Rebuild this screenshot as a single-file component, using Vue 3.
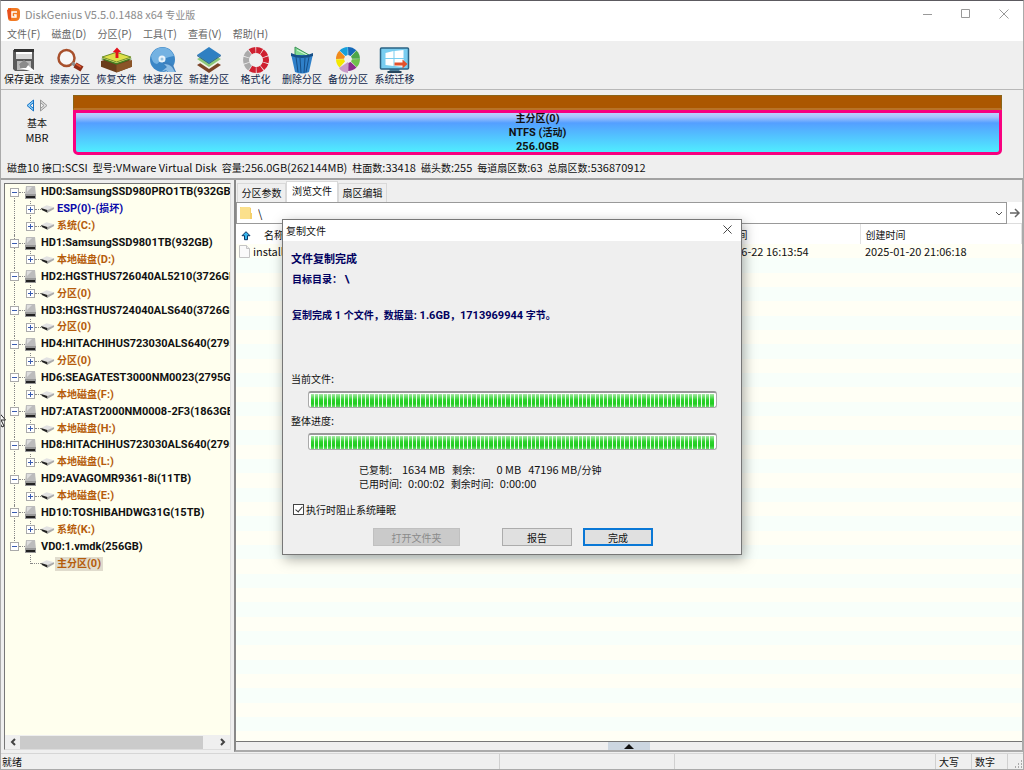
<script setup>
import { h, ref } from 'vue'

// Chinese runs are set one size smaller than the Latin text beside them.
const Mix = (props) =>
  props.t
    .split(/([\u3001-\u9fff\uff00-\uffef]+)/)
    .filter(Boolean)
    .map((s) => (/[\u3001-\u9fff\uff00-\uffef]/.test(s) ? h('span', { class: 'zh' }, s) : s))
Mix.props = ['t']

const menus = ['文件(F)', '磁盘(D)', '分区(P)', '工具(T)', '查看(V)', '帮助(H)']
const tools = [
  { id: 'save', t: '保存更改' },
  { id: 'search', t: '搜索分区' },
  { id: 'recover', t: '恢复文件' },
  { id: 'quick', t: '快速分区' },
  { id: 'layers', t: '新建分区' },
  { id: 'format', t: '格式化' },
  { id: 'trash', t: '删除分区' },
  { id: 'backup', t: '备份分区' },
  { id: 'migrate', t: '系统迁移' },
]
const info = [
  '磁盘10 接口:SCSI',
  '型号:VMware Virtual Disk',
  '容量:256.0GB(262144MB)',
  '柱面数:33418',
  '磁头数:255',
  '每道扇区数:63',
  '总扇区数:536870912',
]
const tree = [
  { t: 'HD0:SamsungSSD980PRO1TB(932GB)', k: 'disk' },
  { t: 'ESP(0)-(损坏)', k: 'part', c: 'blue', more: true },
  { t: '系统(C:)', k: 'part' },
  { t: 'HD1:SamsungSSD9801TB(932GB)', k: 'disk' },
  { t: '本地磁盘(D:)', k: 'part' },
  { t: 'HD2:HGSTHUS726040AL5210(3726GB)', k: 'disk' },
  { t: '分区(0)', k: 'part' },
  { t: 'HD3:HGSTHUS724040ALS640(3726GB)', k: 'disk' },
  { t: '分区(0)', k: 'part' },
  { t: 'HD4:HITACHIHUS723030ALS640(2795GB)', k: 'disk' },
  { t: '分区(0)', k: 'part' },
  { t: 'HD6:SEAGATEST3000NM0023(2795GB)', k: 'disk' },
  { t: '本地磁盘(F:)', k: 'part' },
  { t: 'HD7:ATAST2000NM0008-2F3(1863GB)', k: 'disk' },
  { t: '本地磁盘(H:)', k: 'part' },
  { t: 'HD8:HITACHIHUS723030ALS640(2795GB)', k: 'disk' },
  { t: '本地磁盘(L:)', k: 'part' },
  { t: 'HD9:AVAGOMR9361-8i(11TB)', k: 'disk' },
  { t: '本地磁盘(E:)', k: 'part' },
  { t: 'HD10:TOSHIBAHDWG31G(15TB)', k: 'disk' },
  { t: '系统(K:)', k: 'part' },
  { t: 'VD0:1.vmdk(256GB)', k: 'disk', last: true },
  { t: '主分区(0)', k: 'part', leaf: true, last: true, sel: true },
]
const tabs = ['分区参数', '浏览文件', '扇区编辑']
const path = ref('\\')
const noSleep = ref(true)
const seg = (a, b) => {
  const p = (r, d) => `${13 + r * Math.cos((d * Math.PI) / 180)} ${13 + r * Math.sin((d * Math.PI) / 180)}`
  return `M${p(13, a)}A13 13 0 0 1 ${p(13, b)}L${p(7, b)}A7 7 0 0 0 ${p(7, a)}Z`
}
const ring = Array.from({ length: 10 }, (_, i) => ({
  d: seg(i * 36 - 89, i * 36 - 57),
  c: i > 5 && i < 9 ? '#aaa' : '#cf2030',
}))
const wheelColors = ['#1668b8', '#4fa64a', '#6fc04c', '#8a2c8c', '#c79ac6', '#f4e800', '#f08a1c', '#16a0dc']
const wheel = wheelColors.map((c, i) => {
  const p = (r, d) => `${13 + r * Math.cos((d * Math.PI) / 180)} ${12 + r * Math.sin((d * Math.PI) / 180)}`
  const a = i * 45 - 90
  return { c, d: `M${p(4, a + 4)}L${p(12, a)}A12 12 0 0 1 ${p(12, a + 44)}L${p(4, a + 40)}Z`, low: i === 4 }
})
</script>

<template>
  <div class="window">
    <header class="title">
      <svg class="logo" viewBox="0 0 13 14"><path d="M1 1h8q4 0 4 4v4q0 5-5 5H4Q1 14 1 11Z" fill="#f27a22" /><path d="M0 3l4-2v12l-3-2Z" fill="#e8501c" /><path d="M10 5H5v5h4V8H7" fill="none" stroke="#fff" stroke-width="1.4" /></svg>
      <h1><Mix t="DiskGenius V5.5.0.1488 x64 专业版" /></h1>
      <div class="winbtns">
        <button aria-label="最小化"><svg viewBox="0 0 10 10"><path d="M0 5.5h9" /></svg></button>
        <button aria-label="最大化"><svg viewBox="0 0 10 10"><path d="M.5 .5h8v8h-8z" /></svg></button>
        <button aria-label="关闭窗口"><svg viewBox="0 0 10 10"><path d="M.5 .5l9 9m0-9l-9 9" /></svg></button>
      </div>
    </header>

    <nav class="menu">
      <button v-for="m in menus" :key="m"><Mix :t="m" /></button>
    </nav>

    <div class="toolbar">
      <button v-for="b in tools" :key="b.id">
        <svg viewBox="0 0 26 26" v-if="b.id === 'save'">
          <path d="M2 3h21v21H4L2 22Z" fill="#5b5b5b" /><path d="M3 2h20v3H3z" fill="#333" />
          <path d="M5 5h16v7H5z" fill="#d8d8d8" /><path d="M5 5h16v2H5z" fill="#fff" />
          <path d="M6 14h14v9H6z" fill="#b9b9b9" /><path d="M8 17l4-3 7 6 5 4h-5l-10-3Z" fill="#fff" /><path d="M8 17l5-4 5 4-3 4H9Z" fill="#8b8b8b" />
        </svg>
        <svg viewBox="0 0 26 26" v-else-if="b.id === 'search'">
          <circle cx="9.500" cy="11" r="8" fill="#fff" fill-opacity=".5" stroke="#a8502c" stroke-width="2.500" />
          <path d="M15 16l4 3" stroke="#8b8b8b" stroke-width="3" /><path d="M18 18l7 4" stroke="#8e2d17" stroke-width="6" /><path d="M19 17l5 3" stroke="#e05a34" stroke-width="1.500" />
        </svg>
        <svg viewBox="0 0 32 26" class="wide" v-else-if="b.id === 'recover'">
          <path d="M0 14l16-5 16 5v6l-16 6-16-6Z" fill="#6b3d1b" /><path d="M16 18l16-5v7l-16 6Z" fill="#8a5427" />
          <path d="M0 12l16-6 16 6-16 6Z" fill="#447e22" /><path d="M1 11l15-6 15 6-15 5Z" fill="#f4f08a" /><path d="M1 10l15-5 15 5-15 5Z" fill="#dfe04a" stroke="#6a8b25" />
          <path d="M15 11V5h-3l4.500-5L21 5h-3v6Z" fill="#e3141c" />
        </svg>
        <svg viewBox="0 0 26 26" v-else-if="b.id === 'quick'">
          <circle cx="12.500" cy="12.500" r="12.500" fill="#3b86c6" /><path d="M1 9a12 12 0 0 1 23 0q-10 1-17 8Q2 16 1 9Z" fill="#74b2e2" />
          <circle cx="12" cy="12" r="3.500" fill="#eaf4fb" /><circle cx="12" cy="12" r="1.500" fill="#9bc4e2" /><path d="M13 15q6 0 10 3l3 7H17Z" fill="#3d7fbd" /><path d="M11 25l6-5-3-3q5 0 8 3l3 5h-7l-2-2Z" fill="#8dbde4" />
        </svg>
        <svg viewBox="0 0 26 26" v-else-if="b.id === 'layers'">
          <path d="M1 18l12-7 12 7-12 8Z" fill="#7c4428" /><path d="M1 14l12-6 12 6-12 8Z" fill="#f0f4e9" /><path d="M1 12l12-6 12 6-12 8Z" fill="#8ec97b" /><path d="M1 8l12-8 12 8-12 8Z" fill="#2f80c2" /><path d="M1 8l12 8 12-8v1l-12 8-12-8Z" fill="#205b92" />
        </svg>
        <svg viewBox="0 0 26 26" v-else-if="b.id === 'format'"><path v-for="(s, i) in ring" :key="i" :d="s.d" :fill="s.c" /></svg>
        <svg viewBox="0 0 26 26" v-else-if="b.id === 'trash'">
          <path d="M6 9L6 0l14 8Z" fill="#80d991" stroke="#3d9458" /><path d="M8 3l10 5" stroke="#d8f9da" />
          <path d="M2 7l2 1h18l2-1-4 18q-7 3-14 0Z" fill="#2f80c9" /><path d="M2 6q11 5 22 0v3q-11 4-22 0Z" fill="#174f87" /><path d="M7 10l2 15M11 11l1 15M16 11l-1 15M20 10l-3 15" stroke="#174f87" />
        </svg>
        <svg viewBox="0 0 26 26" v-else-if="b.id === 'backup'">
          <template v-for="(s, i) in wheel" :key="i"><path v-if="!s.low" :d="s.d" :fill="s.c" /></template>
          <path d="M13 15L4 21q2 4 9 5Z" fill="#c99bc8" />
        </svg>
        <svg viewBox="0 0 30 26" class="wide" v-else>
          <path d="M10 22h10v3H10z" fill="#4d7f9b" /><path d="M8 25h14" stroke="#27465c" stroke-width="2" />
          <rect x="1" y="1" width="28" height="21" rx="1" fill="#79cdf0" stroke="#2b6384" stroke-width="1.500" />
          <path d="M6 6l8-2v7H6zm9-2l9-1v8h-9zM6 12h8v7l-8-1zm9 0h9v8l-9-1z" fill="#fff" /><path d="M15 15.500h8v-3l5 4.500-5 4.500v-3h-8Z" fill="#e4512b" />
        </svg>
        <Mix :t="b.t" />
      </button>
    </div>

    <section class="disk">
      <div class="diskline">
        <div class="disktype">
          <div class="arrows">
            <button aria-label="上一个磁盘"><svg viewBox="0 0 9 13"><path d="M7.500 1v11L1 6.500ZM7 4L4 6.500 7 9" fill="#8fd0fa" stroke="#1672c4" /></svg></button>
            <button aria-label="下一个磁盘"><svg viewBox="0 0 9 13"><path d="M1.500 1v11L8 6.500ZM2 4l3 2.500L2 9" fill="#ddd" stroke="#999" /></svg></button>
          </div>
          <Mix t="基本" />
          <span>MBR</span>
        </div>
        <div class="diskbar">
          <div class="brown"></div>
          <div class="volume">
            <span><Mix t="主分区(0)" /></span>
            <span><Mix t="NTFS (活动)" /></span>
            <span>256.0GB</span>
          </div>
        </div>
      </div>
      <p class="info"><span v-for="i in info" :key="i"><Mix :t="i" /></span></p>
    </section>

    <main class="body">
      <aside class="side">
        <ul class="tree">
          <li v-for="(n, i) in tree" :key="i" :class="[n.k, n.c, { last: n.last, leaf: n.leaf, more: n.more, first: i === 0 }]">
            <i class="trunk"></i>
            <i v-if="n.k === 'part'" class="branch"></i>
            <button v-if="!n.leaf" class="exp" :aria-label="n.k === 'disk' ? '折叠' : '展开'">
              <svg viewBox="0 0 9 9"><rect x=".5" y=".5" width="8" height="8" fill="#fff" stroke="#aaa" /><path :d="n.k === 'disk' ? 'M2 4.500h5' : 'M2 4.500h5M4.500 2v5'" stroke="#3a5cb0" /></svg>
            </button>
            <span v-else class="exp"></span>
            <i class="dash"></i>
            <svg v-if="n.k === 'disk'" class="dicon" viewBox="0 0 11 13"><path d="M1 0h9l1 9H0Z" fill="#bcbcbc" /><path d="M2 1h5L2 6Z" fill="#ddd" /><path d="M0 8h11v5H0z" fill="#999" /><path d="M1 10h9v2H1z" fill="#222" /></svg>
            <svg v-else class="picon" viewBox="0 0 15 8"><path d="M0 3l6-3 8 2-6 3Z" fill="#e2e2e2" /><path d="M0 3l7 2v3L1 5Z" fill="#222" /><path d="M7 5l7-3v2L7 8Z" fill="#aaa" /></svg>
            <span class="label" :class="{ sel: n.sel }"><Mix :t="n.t" /></span>
          </li>
        </ul>
        <div class="hscroll">
          <button aria-label="向左滚动"><svg viewBox="0 0 6 8"><path d="M5 1L2 4l3 3" /></svg></button>
          <div class="rail"><div class="thumb"></div></div>
          <button aria-label="向右滚动"><svg viewBox="0 0 6 8"><path d="M1 1l3 3-3 3" /></svg></button>
        </div>
      </aside>

      <section class="files">
        <div class="tabs">
          <button v-for="(t, i) in tabs" :key="t" :class="{ on: i === 1 }"><Mix :t="t" /></button>
        </div>
        <div class="address">
          <div class="combo">
            <svg class="folder" viewBox="0 0 12 14"><path d="M0 1h9l2 1v5h1v6H0Z" fill="#f4d06c" /><path d="M1 1h9v12H0V2Z" fill="#fbe08c" /></svg>
            <input v-model="path" aria-label="路径" />
            <button aria-label="展开路径"><svg viewBox="0 0 8 5"><path d="M1 1l3 3 3-3" /></svg></button>
          </div>
          <button class="go" aria-label="转到"><svg viewBox="0 0 12 12"><path d="M1 6h9M6 2l4 4-4 4" /></svg></button>
        </div>
        <div class="list">
          <table>
            <colgroup><col class="c1" /><col class="c2" /><col class="c3" /></colgroup>
            <thead>
              <tr>
                <th><svg class="up" viewBox="0 0 10 9"><path d="M5 .7l4 4H6.500v4h-3v-4H1Z" fill="#36b6ee" stroke="#0a3565" /></svg><Mix t="名称" /></th>
                <th><Mix t="修改时间" /></th>
                <th><Mix t="创建时间" /></th>
              </tr>
            </thead>
            <tbody>
              <tr>
                <td><svg class="doc" viewBox="0 0 11 13"><path d="M.5 .5h7l3 3v9H.5Z" fill="#fafafa" stroke="#c4c4c4" /><path d="M7.500 .5v3h3" fill="#eee" stroke="#c4c4c4" /></svg>install.wim</td>
                <td>2022-06-22 16:13:54</td>
                <td>2025-01-20 21:06:18</td>
              </tr>
            </tbody>
          </table>
        </div>
        <div class="splitter"><button aria-label="展开面板"><svg viewBox="0 0 10 5"><path d="M5 0l5 5H0Z" fill="#111" /></svg></button></div>
      </section>
    </main>

    <footer class="status">
      <span class="ready"><Mix t="就绪" /></span><span class="s2"></span><span class="s3"></span>
      <span class="key"><Mix t="大写" /></span><span class="key"><Mix t="数字" /></span>
      <span class="grip"><svg viewBox="0 0 9 9"><path d="M7 1h1M4 4h1M7 4h1M1 7h1M4 7h1M7 7h1" stroke="#aaa" stroke-width="2" /></svg></span>
    </footer>

    <section class="dialog" role="dialog" aria-label="复制文件">
      <header><h2><Mix t="复制文件" /></h2><button aria-label="关闭"><svg viewBox="0 0 10 10"><path d="M.5 .5l9 9m0-9l-9 9" /></svg></button></header>
      <div class="content">
        <h3>文件复制完成</h3>
        <p class="target"><Mix t="目标目录： \" /></p>
        <p class="result"><Mix t="复制完成 1 个文件，数据量: 1.6GB，1713969944 字节。" /></p>
        <span id="lb1" class="plabel"><Mix t="当前文件:" /></span>
        <div class="progress" role="progressbar" aria-labelledby="lb1" aria-valuenow="100"><div></div></div>
        <span id="lb2" class="plabel second"><Mix t="整体进度:" /></span>
        <div class="progress" role="progressbar" aria-labelledby="lb2" aria-valuenow="100"><div></div></div>
        <div class="stats">
          <p><span><Mix t="已复制:" /></span><span class="pad">1634 MB</span><span><Mix t="剩余:" /></span><span class="pad zero">0 MB</span><span><Mix t="47196 MB/分钟" /></span></p>
          <p class="times"><span><Mix t="已用时间:" /></span><span>0:00:02</span><span><Mix t="剩余时间:" /></span><span>0:00:00</span></p>
        </div>
        <label class="check"><input type="checkbox" v-model="noSleep" /><Mix t="执行时阻止系统睡眠" /></label>
        <div class="actions">
          <button class="open" disabled><Mix t="打开文件夹" /></button>
          <button><Mix t="报告" /></button>
          <button class="primary"><Mix t="完成" /></button>
        </div>
      </div>
    </section>

    <svg class="cursor" viewBox="0 0 7 16"><path d="M-5 -4L5.500 8H1l3 6-2 1-3-6-2 2Z" fill="#fff" stroke="#222" /></svg>
  </div>
</template>

<style>
html { background: #efefef; }
.zh { font-size: 10px; line-height: 1; }
</style>

<style scoped>
* { box-sizing: border-box; margin: 0; padding: 0; }
.window {
  position: relative; display: flex; flex-direction: column; height: 100vh; overflow: hidden;
  font: 11px/14px "Noto Sans CJK SC", "Noto Sans", sans-serif; color: #111; background: #efefef;
  border: 1px solid #aaa; border-top-color: #5c5a60; white-space: nowrap;
}
button { font: inherit; color: inherit; background: none; border: 0; }
svg { display: block; flex: none; overflow: visible; }

.title { display: flex; align-items: center; height: 25px; background: #fff; padding-left: 6px; }
.logo { width: 13px; height: 14px; }
.title h1 { flex: 1; margin-left: 5px; font-weight: 400; font-size: 11px; color: #8c8c8c; }
.winbtns { display: flex; }
.winbtns button { width: 38px; height: 24px; display: grid; place-items: center; }
.winbtns svg { width: 10px; height: 10px; fill: none; stroke: #999; }
.menu { display: flex; gap: 11px; background: #fff; padding: 0 6px 1px; height: 15px; color: #666; }
.toolbar { display: flex; height: 49px; border-bottom: 1px solid #b8b8b8; }
.toolbar button { width: 46px; display: flex; flex-direction: column; align-items: center; padding-top: 6px; color: #101f4a; line-height: 14px; }
.toolbar button:first-child { color: #111; }
.toolbar button:nth-child(3n) { width: 47px; }
.toolbar svg { width: 26px; height: 26px; margin-bottom: 1px; }
.toolbar svg.wide { width: 31px; }

.disk { height: 90px; border-bottom: 2px solid #a2a2a2; padding-top: 5px; }
.diskline { display: flex; height: 60px; padding-right: 21px; }
.disktype { width: 72px; display: flex; flex-direction: column; align-items: center; gap: 3px; padding-top: 4px; }
.arrows { display: flex; gap: 4px; height: 16px; }
.arrows button { height: 13px; }
.arrows svg { width: 9px; height: 13px; }
.disktype > span { line-height: 12px; }
.diskbar { flex: 1; display: flex; flex-direction: column; }
.brown { height: 15px; flex: none; background: #ab5700; border: 1px solid #8b6418; border-bottom: 2px solid #b87327; }
.volume {
  flex: 1; min-height: 0; display: flex; flex-direction: column; align-items: center; justify-content: center;
  font: 700 11px/14px Roboto, "Noto Sans CJK SC", sans-serif;
  border: 3px solid #f8007f; border-radius: 0 0 5px 5px;
  background: linear-gradient(#bfd0fc 0, #a5c4fc 4px, #549fff 10px, #50edff 100%);
}
.info { display: flex; gap: 5px; padding: 5px 6px 0; }

.body { flex: 1; min-height: 0; display: flex; }
.side { width: 227px; margin: 3px; border: 1px solid #777; border-right-color: #ddd; border-bottom-color: #ddd; background: #ffffee; display: flex; flex-direction: column; min-height: 0; }
.tree { list-style: none; height: 388px; display: grid; grid-auto-rows: 1fr; overflow: hidden; flex: none; font: 700 11px/14px Roboto, "Noto Sans CJK SC", sans-serif; }
.tree li { position: relative; display: flex; align-items: center; min-height: 0; padding-left: 5px; }
.tree .part { padding-left: 21px; color: #b55c0b; }
.tree .blue { color: #0a0aaa; }
.exp { width: 9px; height: 9px; flex: none; position: relative; }
.exp svg { width: 9px; height: 9px; }
.dash { width: 6px; border-top: 1px dotted #888; flex: none; }
.trunk { position: absolute; left: 9px; top: 0; bottom: 0; border-left: 1px dotted #888; }
.first .trunk { top: 8px; }
.disk.last .trunk { bottom: 8px; }
.part.last .trunk { display: none; }
.branch { position: absolute; left: 25px; top: 0; height: 9px; border-left: 1px dotted #888; }
.more .branch { height: 100%; }
.leaf .dash { width: 10px; margin-left: -4px; }
.dicon { width: 11px; height: 13px; }
.picon { width: 14px; height: 8px; }
.label { margin-left: 5px; }
.part .label { margin-left: 0; padding: 0 2px; }
.sel { background: #e0dccd; }
li.disk { height: auto; border: 0; padding-top: 0; }
.hscroll { margin-top: auto; height: 14px; background: #efefef; display: flex; align-items: center; }
.hscroll button { width: 15px; display: grid; place-items: center; }
.hscroll svg { width: 6px; height: 8px; fill: none; stroke: #444; stroke-width: 2; }
.rail { flex: 1; }
.thumb { width: 94%; height: 13px; background: #cbcbcb; }

.files { flex: 1; min-width: 0; display: flex; flex-direction: column; border-left: 2px solid #888; border-bottom: 2px solid #aaa; border-right: 1px solid #aaa; margin-bottom: 1px; }
.tabs { display: flex; align-items: flex-end; height: 22px; padding-left: 1px; }
.tabs button { width: 49px; height: 19px; border: 1px solid #d9d9d9; border-bottom: 0; padding-bottom: 3px; }
.tabs .on { width: 52px; height: 21px; background: #fff; padding-bottom: 5px; }
.address { display: flex; height: 22px; background: #fff; }
.combo { flex: 1; display: flex; align-items: center; border: 1px solid #999; padding-left: 3px; }
.folder { width: 12px; height: 14px; }
.combo input { flex: 1; min-width: 0; border: 0; outline: 0; font: inherit; margin-left: 6px; background: none; color: #111; }
.combo button { width: 15px; display: grid; place-items: center; }
.combo svg:not(.folder) { width: 8px; height: 5px; fill: none; stroke: #555; }
.go { width: 15px; display: grid; place-items: center; border-bottom: 1px solid #ddd; }
.go svg { width: 12px; height: 12px; fill: none; stroke: #666; stroke-width: 1.500; }
.list {
  flex: 1; min-height: 0;
  background: repeating-linear-gradient(#fffff5 0 14px, #f8fffa 14px 29px, #fffff5 29px 43px, #f8fffa 43px 57px, #fffff5 57px 72px, #f8fffa 72px 86px) 0 20px #fff no-repeat;
}
table { width: 100%; table-layout: fixed; border-collapse: collapse; }
.c1 { width: 466px; }
.c2 { width: 158px; }
th { height: 20px; font-weight: 400; text-align: left; background: #fff; border-right: 1px solid #e2e2e2; padding: 0 0 1px 5px; }
td { height: 14px; padding-left: 5px; }
th:first-child, td:first-child { padding-left: 3px; }
.up { display: inline-block; width: 10px; height: 9px; margin: 0 13px 0 2px; vertical-align: -1px; }
.doc { display: inline-block; width: 11px; height: 13px; margin-right: 3px; vertical-align: -2px; }
.splitter { height: 9px; border-top: 1px solid #777; display: flex; justify-content: center; }
.splitter button { width: 42px; background: #ccd6e0; display: grid; place-items: center; }
.splitter svg { width: 10px; height: 5px; }

.status { display: flex; height: 16px; border-top: 1px solid #d6d6d6; line-height: 15px; }
.status > span { border-right: 1px solid #d0d0d0; }
.ready { width: 499px; padding-left: 1px; }
.s2 { width: 175px; }
.s3 { flex: 1; }
.key { width: 36px; padding-left: 3px; }
.status .grip { width: 15px; border: 0; display: grid; place-items: end; }
.grip svg { width: 9px; height: 9px; }

.dialog { position: absolute; left: 281px; top: 218px; width: 460px; background: #efefef; border: 1px solid #777; box-shadow: 2px 4px 12px rgba(0, 0, 0, .35); }
.dialog header { height: 21px; background: #fff; display: flex; align-items: center; justify-content: space-between; padding: 0 9px 2px 3px; }
.dialog h2 { font-size: 11px; font-weight: 400; }
.dialog header svg { width: 9px; height: 9px; fill: none; stroke: #333; }
.content { padding: 9px 8px 8px; display: flex; flex-direction: column; }
.content h3 { font-size: 11px; line-height: 16px; color: #000060; }
.target, .result { color: #000060; font: 700 11px/14px Roboto, "Noto Sans CJK SC", sans-serif; padding-left: 1px; }
.target { margin-top: 7px; }
.result { margin-top: 22px; }
.plabel { margin-top: 48px; }
.second { margin-top: 5px; }
.progress { height: 17px; margin: 6px 16px 0 17px; border: 1px solid #aaa; border-top: 2px solid #999; border-radius: 3px; background: #fff; padding: 1px 2px; }
.progress div {
  height: 13px;
  background:
    repeating-linear-gradient(90deg, transparent 0 3px, #eaffea 3px 4px, transparent 4px 7px, #eaffea 7px 8px, transparent 8px 12px, #eaffea 12px 13px, transparent 13px 16px, #eaffea 16px 17px),
    linear-gradient(#a8e8a8, #2bd22b 45%, #22cc22 75%, #66dd66);
}
.stats { margin: 12px 0 0 68px; }
.stats p { display: flex; gap: 7px; }
.stats .times { gap: 6px; }
.pad { width: 46px; text-align: right; }
.zero { width: 39px; }
.check { display: flex; align-items: center; gap: 2px; margin-top: 14px; }
.check input { appearance: none; width: 11px; height: 11px; margin-left: 2px; border: 1px solid #444; background: #fff; display: grid; place-items: center; }
.check input:checked::before { content: ""; width: 3px; height: 6px; border: solid #333; border-width: 0 1px 1px 0; transform: rotate(40deg); margin-bottom: 2px; }
.actions { display: flex; margin: 13px 0 0 82px; }
.actions button { width: 70px; height: 18px; border: 1px solid #acacac; background: #e0e0e0; line-height: 15px; margin-right: 11px; }
.actions .open { width: 87px; margin-right: 42px; background: #cacaca; border-color: #c0c0c0; color: #8a8a8a; }
.actions .primary { border: 2px solid #0a78d6; margin: 0; line-height: 13px; }
.cursor { position: absolute; left: -1px; top: 411px; width: 7px; height: 16px; }
</style>
